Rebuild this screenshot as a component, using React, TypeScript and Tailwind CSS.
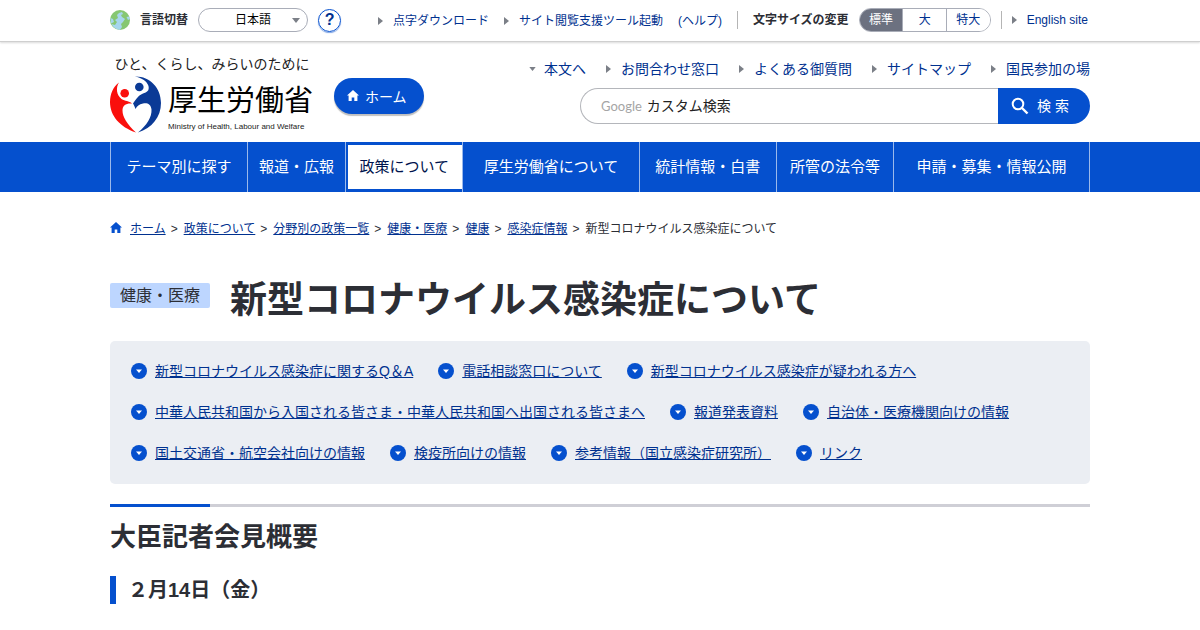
import { useState } from 'react';

const headerLinks = ['お問合わせ窓口', 'よくある御質問', 'サイトマップ', '国民参加の場'];

const navItems = [
  'テーマ別に探す',
  '報道・広報',
  '政策について',
  '厚生労働省について',
  '統計情報・白書',
  '所管の法令等',
  '申請・募集・情報公開',
];

const crumbs = ['ホーム', '政策について', '分野別の政策一覧', '健康・医療', '健康', '感染症情報'];

const anchors = [
  '新型コロナウイルス感染症に関するQ＆A',
  '電話相談窓口について',
  '新型コロナウイルス感染症が疑われる方へ',
  '中華人民共和国から入国される皆さま・中華人民共和国へ出国される皆さまへ',
  '報道発表資料',
  '自治体・医療機関向けの情報',
  '国土交通省・航空会社向けの情報',
  '検疫所向けの情報',
  '参考情報（国立感染症研究所）',
  'リンク',
];

const sizes = ['標準', '大', '特大'];

function ArrowRight() {
  return (
    <svg className="h-2 w-[5px] shrink-0" viewBox="0 0 5 8" fill="#7b7f87" aria-hidden="true">
      <path d="M0 0L5 4L0 8Z" />
    </svg>
  );
}

function ArrowDown({ className }: { className?: string }) {
  return (
    <svg className={className} viewBox="0 0 8 5" fill="#7b7f87" aria-hidden="true">
      <path d="M0 0H8L4 5Z" />
    </svg>
  );
}

function HomeIcon({ className }: { className?: string }) {
  return (
    <svg className={className} viewBox="0 0 12 11" fill="currentColor" aria-hidden="true">
      <path d="M6 0L12 5.600H10.400V11H7.300V7.400H4.700V11H1.600V5.600H0Z" />
    </svg>
  );
}

function Globe() {
  return (
    <svg className="h-5 w-5 shrink-0" viewBox="0 0 20 20" aria-hidden="true">
      <circle cx="10" cy="10" r="10" fill="#86c772" />
      <path d="M9 3L12 2L13 4L11 5L12 7L15 9L13 12L11 14L12 17L10 20C6 19.500 3 17 1.500 14L5 15L7 12L5 10L8 8L7 5Z" fill="#a6d6ee" />
      <path d="M0.500 8L3 9L4 12L1 13.500Z" fill="#a6d6ee" />
      <path d="M16.500 7L19 6.500L20 9L18 10Z" fill="#a6d6ee" />
    </svg>
  );
}

function Emblem() {
  return (
    <svg className="h-[57px] w-[51px] shrink-0" viewBox="0 0 51 57" aria-hidden="true">
      <path
        d="M9 6.500C3 11 0 18 0 26C0 40 10 51 26 56.500C17 48 12.500 41 12.500 34.500C12.500 29.500 16 27 22 27.500C19 24.500 15 25.500 11.500 23C6.500 19 5.500 12 9 6.500Z"
        fill="#fa0f0c"
      />
      <circle cx="14.700" cy="17.300" r="4.300" fill="#fa0f0c" />
      <path
        d="M25 0.500C39 0 51 11 51 27C51 41 42 52 28 56.500C37 49 42 41 41.500 33.500C41 28 37 26.500 33 27.500C29 28.500 27 30 25.500 33C24.500 30 23.500 28.500 23 27.500C27 22 29 19 33 17.500C37 16 39.500 15 38.500 10C37 5 31 1.500 25 0.500Z"
        fill="#0b3a96"
      />
      <circle cx="29.300" cy="11" r="4.300" fill="#0b3a96" />
    </svg>
  );
}

export default function App() {
  const [size, setSize] = useState('標準');
  const [query, setQuery] = useState('');

  return (
    <div className="min-h-screen bg-white font-['Liberation_Sans','Noto_Sans_CJK_JP',sans-serif] text-[#2c2e35]">
      {/* Utility bar */}
      <div className="border-b border-[#cfcfcf] shadow-[0_1px_2px_rgba(0,0,0,0.15)]">
        <div className="mx-auto flex h-[41px] max-w-[980px] items-center pr-0.5 pb-px text-xs">
          <Globe />
          <label htmlFor="lang" className="ml-[10px] font-bold">言語切替</label>
          <div className="relative ml-[10px]">
            <select
              id="lang"
              className="block h-6 w-[110px] appearance-none rounded-full border border-[#a9adb8] bg-white text-center text-black"
            >
              <option>日本語</option>
            </select>
            <ArrowDown className="pointer-events-none absolute top-[10px] right-2 h-[5px] w-2" />
          </div>
          <button
            type="button"
            className="ml-[10px] h-[23px] w-[23px] rounded-full border border-[#0550ce] text-base leading-5 font-bold text-[#00308f] shadow-[0_1px_1px_rgba(5,80,206,0.5)]"
          >
            ?
          </button>

          <div className="ml-auto flex items-center pt-px text-[#00318f]">
            <a href="#" className="flex items-center gap-[10px]"><ArrowRight />点字ダウンロード</a>
            <a href="#" className="ml-[15px] flex items-center gap-[10px]"><ArrowRight />サイト閲覧支援ツール起動</a>
            <a href="#" className="ml-[15px]">(ヘルプ)</a>
          </div>
          <div className="ml-[15px] flex h-[18px] items-center border-l border-[#b5b5b5] pl-[15px]">
            <span className="font-bold">文字サイズの変更</span>
          </div>
          <div className="ml-[10px] flex h-6 w-[132px] overflow-hidden rounded-full border border-[#a9adb8]">
            {sizes.map(s => (
              <button
                key={s}
                type="button"
                onClick={() => setSize(s)}
                className={`flex-1 border-l border-[#a9adb8] first:border-l-0 ${
                  size === s ? 'bg-[#6c7180] text-white' : 'bg-white text-[#00318f]'
                }`}
              >
                {s}
              </button>
            ))}
          </div>
          <div className="ml-[10px] flex h-[18px] items-center border-l border-[#b5b5b5] pl-[10px]">
            <a href="#" className="flex items-center gap-[10px] text-[#00318f]"><ArrowRight />English site</a>
          </div>
        </div>
      </div>

      {/* Header */}
      <header className="mx-auto flex h-[100px] max-w-[980px] justify-between">
        <div className="flex">
          <a href="#" className="block w-[204px] pt-3 text-black">
            <span className="block text-center text-sm leading-5 whitespace-nowrap text-[#222]">ひと、くらし、みらいのために</span>
            <span className="mt-[2px] flex items-start gap-[7px]">
              <Emblem />
              <span className="block whitespace-nowrap">
                <span className="block pt-[5px] text-[29px] leading-10">厚生労働省</span>
                <span className="block text-[8px] leading-3 text-[#222]">
                  Ministry of Health, Labour and Welfare
                </span>
              </span>
            </span>
          </a>
          <a
            href="#"
            className="mt-9 ml-5 flex h-9 w-[90px] items-center gap-[6px] rounded-full bg-[#0550ce] pt-px pl-[13px] text-sm text-white shadow-[0_2px_1px_rgba(0,0,0,0.25)]"
          >
            <HomeIcon className="mb-0.5 h-[11px] w-3" />
            ホーム
          </a>
        </div>

        <div className="w-[561px] pt-4">
          <ul className="flex justify-end gap-5 text-sm leading-[22px] whitespace-nowrap text-[#00318f]">
            <li>
              <a href="#" className="flex items-center gap-2"><ArrowDown className="h-1 w-[7px]" />本文へ</a>
            </li>
            {headerLinks.map(t => (
              <li key={t}>
                <a href="#" className="flex items-center gap-[10px]"><ArrowRight />{t}</a>
              </li>
            ))}
          </ul>
          <form className="mt-2 ml-auto flex h-9 w-[510px] text-sm" onSubmit={e => e.preventDefault()}>
            <label className="flex flex-1 items-center gap-[5px] rounded-l-full border border-r-0 border-[#b4b6bb] pl-5">
              <span className="font-[Lato,sans-serif] text-[13px] text-[#a5a5a5]">Google</span>
              <input
                type="text"
                value={query}
                onChange={e => setQuery(e.target.value)}
                placeholder="カスタム検索"
                className="min-w-0 flex-1 outline-none placeholder:text-[#222]"
              />
            </label>
            <button
              type="submit"
              className="flex w-[92px] items-center gap-2 rounded-r-full bg-[#0550ce] pl-[13px] text-white"
            >
              <svg className="h-[18px] w-[18px]" viewBox="0 0 18 18" fill="none" stroke="currentColor" aria-hidden="true">
                <circle cx="7" cy="7" r="5.300" strokeWidth="2" />
                <path d="M11 11L16.500 16.500" strokeWidth="2.400" />
              </svg>
              検 索
            </button>
          </form>
        </div>
      </header>

      {/* Global navigation */}
      <nav className="bg-[#0550ce]">
        <ul className="mx-auto grid h-[50px] max-w-[980px] grid-cols-[14fr_10fr_12fr_18fr_14fr_12fr_20fr] border-r border-[#9bb9eb] text-[15px] whitespace-nowrap">
          {navItems.map((t, i) => (
            <li key={t} className="border-l border-[#9bb9eb]">
              <a
                href="#"
                className={`flex h-full items-center justify-center ${
                  i === 2 ? 'border-y-3 border-l-2 border-[#0550ce] bg-white pr-0.5 text-[#00134d]' : 'text-white'
                }`}
              >
                {t}
              </a>
            </li>
          ))}
        </ul>
      </nav>

      <main className="mx-auto max-w-[980px]">
        {/* Breadcrumb */}
        <ol className="flex items-center pt-7 text-xs leading-[18px]">
          <li className="mr-2 mb-1 text-[#0550ce]"><HomeIcon className="h-[11px] w-3" /></li>
          {crumbs.map(c => (
            <li key={c}>
              <a href="#" className="text-[#00318f] underline">{c}</a>
              <span className="mr-1.5 ml-[5px]">&gt;</span>
            </li>
          ))}
          <li>新型コロナウイルス感染症について</li>
        </ol>

        <div className="mt-[35px] flex items-start gap-5">
          <span className="mt-[10px] rounded-xs bg-[#bdd6ff] px-[10px] text-base leading-[25px]">健康・医療</span>
          <h1 className="text-[37px] leading-[56px] font-bold">新型コロナウイルス感染症について</h1>
        </div>

        <ul className="mt-3 flex flex-wrap gap-x-[25px] gap-y-5 rounded-[5px] bg-[#ebeef3] py-5 pr-5 pl-[21px] text-sm leading-[21px]">
          {anchors.map(t => (
            <li key={t}>
              <a href="#" className="flex items-center gap-2 text-[#00318f] underline">
                <svg className="mb-0.5 h-4 w-4 shrink-0" viewBox="0 0 16 16" aria-hidden="true">
                  <circle cx="8" cy="8" r="8" fill="#0550ce" />
                  <path d="M5 6.500H11L8 10Z" fill="#fff" />
                </svg>
                {t}
              </a>
            </li>
          ))}
        </ul>

        <section className="mt-5">
          <div className="h-[3px] bg-[#cfcfd6]">
            <div className="h-full w-[100px] bg-[#0550ce]" />
          </div>
          <h2 className="mt-[10px] text-[26px] leading-[40px] font-bold">大臣記者会見概要</h2>
          <h3 className="mt-[19px] border-l-6 border-[#0550ce] pl-3 text-xl leading-7 font-bold">２月14日（金）</h3>
        </section>
      </main>
    </div>
  );
}
